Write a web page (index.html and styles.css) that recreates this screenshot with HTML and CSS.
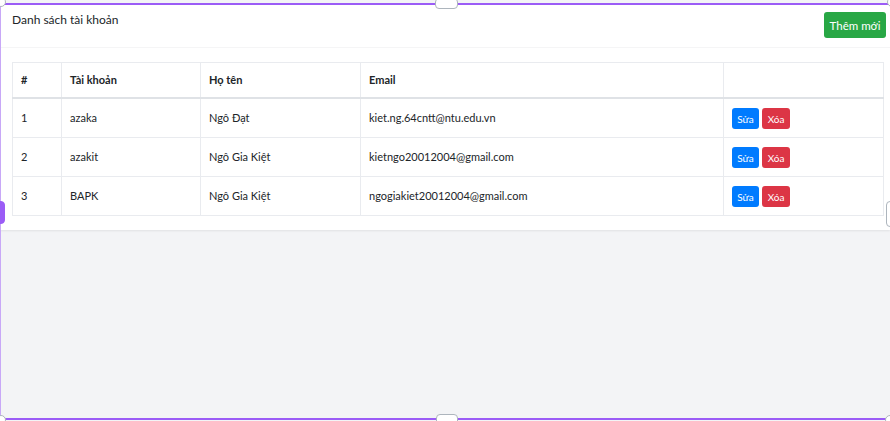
FILE: index.html
```html
<!DOCTYPE html>
<html lang="vi">
<head>
<meta charset="utf-8">
<title>Danh sách tài khoản</title>
<link rel="stylesheet" href="styles.css">
</head>
<body>
<div class="page">
  <div class="card">
    <div class="card-header">
      <div class="title">Danh sách tài khoản</div>
      <button class="btn btn-success">Thêm mới</button>
    </div>
    <div class="card-body">
      <table class="table">
        <colgroup>
          <col class="c-num"><col class="c-acc"><col class="c-name"><col class="c-mail"><col class="c-act">
        </colgroup>
        <thead>
          <tr><th>#</th><th>Tài khoản</th><th>Họ tên</th><th>Email</th><th></th></tr>
        </thead>
        <tbody>
          <tr><td>1</td><td>azaka</td><td>Ngô Đạt</td><td>kiet.ng.64cntt@ntu.edu.vn</td><td><button class="btn btn-sm btn-primary">Sửa</button><button class="btn btn-sm btn-danger">Xóa</button></td></tr>
          <tr><td>2</td><td>azakit</td><td>Ngô Gia Kiệt</td><td>kietngo20012004@gmail.com</td><td><button class="btn btn-sm btn-primary">Sửa</button><button class="btn btn-sm btn-danger">Xóa</button></td></tr>
          <tr><td>3</td><td>BAPK</td><td>Ngô Gia Kiệt</td><td>ngogiakiet20012004@gmail.com</td><td><button class="btn btn-sm btn-primary">Sửa</button><button class="btn btn-sm btn-danger">Xóa</button></td></tr>
        </tbody>
      </table>
    </div>
  </div>
</div>
<div class="frame">
  <span class="h h-tl"></span><span class="h h-tr"></span><span class="h h-bl"></span><span class="h h-br"></span>
  <span class="pill p-top"></span><span class="pill p-bottom"></span>
  <span class="pill p-left"></span><span class="pill p-right"></span>
</div>
</body>
</html>
```
FILE: styles.css
```css
html, body { margin: 0; padding: 0; }
body {
  background: #f3f4f6;
  font-family: Lato, "Noto Sans", sans-serif;
  color: #212529;
  width: 890px;
  height: 421px;
  overflow: hidden;
  position: relative;
}
.page { padding-top: 4px; }
.card {
  background: #fff;
  box-shadow: 0 1px 2px rgba(0,0,0,0.08);
}
.card-header {
  height: 44px;
  box-sizing: border-box;
  display: flex;
  justify-content: space-between;
  align-items: flex-start;
  padding: 7px 4px 0 12px;
  border-bottom: 1px solid #f5f5f6;
}
.title { font-size: 12px; line-height: 18px; }
.btn {
  border: none;
  border-radius: 3px;
  color: #fff;
  font-family: inherit;
  cursor: pointer;
}
.btn-success {
  background: #28a745;
  font-size: 11.5px;
  height: 26px;
  width: 62px;
  padding: 0;
  margin-top: 1px;
}
.card-body { padding: 14px 7px 14px 12px; }
.table {
  width: 871px;
  border-collapse: collapse;
  font-size: 11px;
  table-layout: fixed;
}
.c-num { width: 49px; }
.c-acc { width: 139px; }
.c-name { width: 160px; }
.c-mail { width: 363px; }
.c-act { width: 160px; }
.table th, .table td {
  border: 1px solid #e9ebef;
  text-align: left;
  padding: 9px 8px 8px;
  line-height: 19px;
}
.table th {
  font-weight: 700;
  padding: 8px 8px;
  line-height: 18px;
  border-bottom: 2px solid #dfe2e6;
}
.table td { vertical-align: top; }
.btn-sm {
  font-size: 10px;
  height: 21px;
  width: 27px;
  padding: 0;
  vertical-align: top;
  margin-right: 3px;
}
.btn-danger { width: 28px; }
.btn-primary { background: #007bff; }
.btn-danger { background: #dc3545; }

.frame {
  position: absolute;
  left: 0; top: 3px;
  width: 890px; height: 417px;
  border-top: 2px solid #9b5cf6;
  border-bottom: 2px solid #9b5cf6;
  border-left: 1px solid #c8a8f7;
  box-sizing: border-box;
  pointer-events: none;
}
.h {
  position: absolute;
  width: 10px; height: 10px;
  border-radius: 50%;
  background: #fff;
  border: 1px solid #adb5bd;
  box-sizing: border-box;
}
.h-tl { left: -5px; top: -8px; }
.h-tr { right: -7px; top: -8px; }
.h-bl { left: -5px; bottom: -7px; }
.h-br { right: -5px; bottom: -7px; }
.pill {
  position: absolute;
  background: #fff;
  border: 1px solid #adb5bd;
  border-radius: 4px;
  box-sizing: border-box;
}
.p-top { left: 434px; top: -7px; width: 23px; height: 11px; }
.p-bottom { left: 435px; bottom: -7px; width: 22px; height: 11px; }
.p-left { left: -5px; top: 196px; width: 9px; height: 23px; background: #9b5cf6; border-color: #9b5cf6; }
.p-right { right: -6px; top: 196px; width: 10px; height: 26px; }
```
